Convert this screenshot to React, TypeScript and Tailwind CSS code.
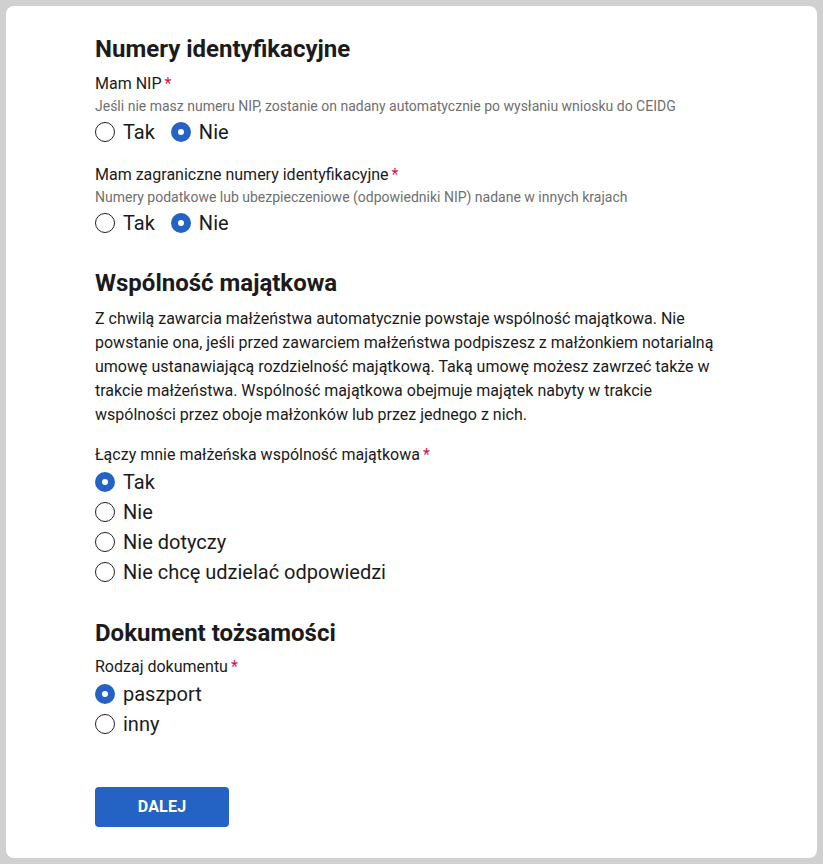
import React from "react";

const Req = () => <span className="text-[#d3124f] ml-[3px]">*</span>;

function Radio({ checked, label }: { checked?: boolean; label: string }) {
  return (
    <label className="flex items-center h-[30px] gap-[8px] cursor-pointer">
      {checked ? (
        <span className="w-[20px] h-[20px] rounded-full bg-[#2462c4] flex items-center justify-center shrink-0">
          <span className="w-[6px] h-[6px] rounded-full bg-white" />
        </span>
      ) : (
        <span className="w-[20px] h-[20px] rounded-full border-[1.5px] border-[#222] bg-white shrink-0" />
      )}
      <span className="text-[20px] leading-[30px] text-[#1b1b1b]">{label}</span>
    </label>
  );
}

export default function App() {
  return (
    <div
      className="min-h-[864px] bg-[#d0d0d0] p-[6px]"
      style={{ fontFamily: "Roboto, 'Noto Sans', sans-serif" }}
    >
      <div className="bg-white rounded-[8px] h-[852px] pl-[89px] pt-[27px] pb-[31px] text-[#1b1b1b]">
        <h2 className="text-[24px] leading-[32px] font-bold mb-[7px]">Numery identyfikacyjne</h2>

        <div className="mb-[16px]">
          <div className="text-[16px] leading-[24px]">
            Mam NIP<Req />
          </div>
          <div className="text-[14px] leading-[20px] text-[#6f6f6f]">
            Jeśli nie masz numeru NIP, zostanie on nadany automatycznie po wysłaniu wniosku do CEIDG
          </div>
          <div className="flex gap-[16px] mt-px">
            <Radio label="Tak" />
            <Radio checked label="Nie" />
          </div>
        </div>

        <div>
          <div className="text-[16px] leading-[24px]">
            Mam zagraniczne numery identyfikacyjne<Req />
          </div>
          <div className="text-[14px] leading-[20px] text-[#6f6f6f]">
            Numery podatkowe lub ubezpieczeniowe (odpowiedniki NIP) nadane w innych krajach
          </div>
          <div className="flex gap-[16px] mt-px">
            <Radio label="Tak" />
            <Radio checked label="Nie" />
          </div>
        </div>

        <h2 className="text-[24px] leading-[32px] font-bold mt-[29px] mb-[8px]">Wspólność majątkowa</h2>
        <p className="text-[16px] leading-[24px] w-[622px] mb-[16px]">
          Z chwilą zawarcia małżeństwa automatycznie powstaje wspólność majątkowa. Nie powstanie ona, jeśli
          przed zawarciem małżeństwa podpiszesz z małżonkiem notarialną umowę ustanawiającą rozdzielność
          majątkową. Taką umowę możesz zawrzeć także w trakcie małżeństwa. Wspólność majątkowa obejmuje
          majątek nabyty w trakcie wspólności przez oboje małżonków lub przez jednego z nich.
        </p>
        <div className="text-[16px] leading-[24px]">
          Łączy mnie małżeńska wspólność majątkowa<Req />
        </div>
        <div className="flex flex-col">
          <Radio checked label="Tak" />
          <Radio label="Nie" />
          <Radio label="Nie dotyczy" />
          <Radio label="Nie chcę udzielać odpowiedzi" />
        </div>

        <h2 className="text-[24px] leading-[32px] font-bold mt-[30px] mb-[6px]">Dokument tożsamości</h2>
        <div className="text-[16px] leading-[24px]">
          Rodzaj dokumentu<Req />
        </div>
        <div className="flex flex-col">
          <Radio checked label="paszport" />
          <Radio label="inny" />
        </div>

        <button className="mt-[48px] w-[134px] h-[40px] rounded-[4px] bg-[#2462c4] text-white font-bold text-[16px] tracking-[0.2px]">
          DALEJ
        </button>
      </div>
    </div>
  );
}
